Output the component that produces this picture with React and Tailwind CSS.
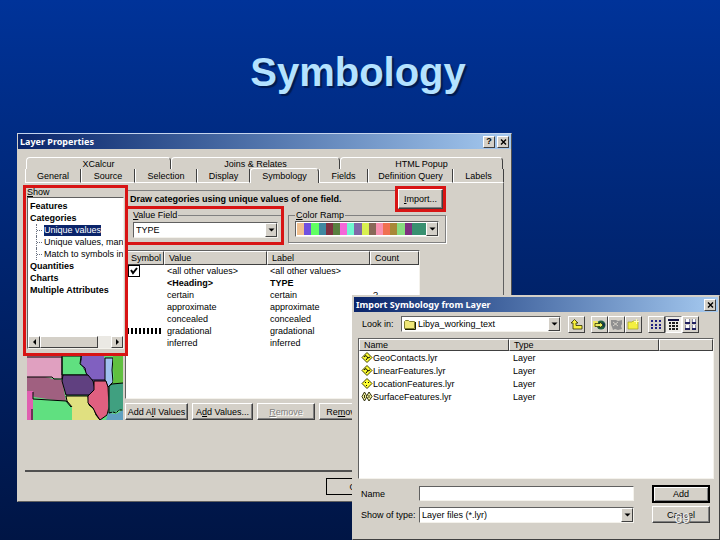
import { useState } from 'react';
import clsx from 'clsx';

const RAISED = 'border border-t-white border-l-white border-r-[#404040] border-b-[#404040] bg-[#d4d0c8]';
const SUNKEN = 'border border-t-[#606060] border-l-[#606060] border-r-[#f4f2ec] border-b-[#f4f2ec] bg-white';

const TOP_TABS = [
  { label: 'XCalcur', width: 'w-[145px]' },
  { label: 'Joins & Relates', width: 'w-[169px]' },
  { label: 'HTML Popup', width: 'flex-1' },
];
const TABS = [
  { label: 'General', width: 'w-[56px]' },
  { label: 'Source', width: 'w-[54px]' },
  { label: 'Selection', width: 'w-[62px]' },
  { label: 'Display', width: 'w-[53px]' },
  { label: 'Symbology', width: 'w-[69px]' },
  { label: 'Fields', width: 'w-[49px]' },
  { label: 'Definition Query', width: 'w-[85px]' },
  { label: 'Labels', width: 'flex-1' },
];

const SHOW_ITEMS = [
  { label: 'Features' },
  { label: 'Categories' },
  { label: 'Unique values', child: true },
  { label: 'Unique values, many f', child: true },
  { label: 'Match to symbols in a', child: true },
  { label: 'Quantities' },
  { label: 'Charts' },
  { label: 'Multiple Attributes' },
];

const ROWS = [
  { value: '<all other values>', label: '<all other values>', symbol: 'check' },
  { value: '<Heading>', label: 'TYPE', bold: true },
  { value: 'certain', label: 'certain', count: '?' },
  { value: 'approximate', label: 'approximate' },
  { value: 'concealed', label: 'concealed' },
  { value: 'gradational', label: 'gradational', symbol: 'dash' },
  { value: 'inferred', label: 'inferred' },
];

const RAMP = [
  'bg-[#f0c090]', 'bg-[#7050e0]', 'bg-[#60ff60]', 'bg-[#4088a0]', 'bg-[#803040]', 'bg-[#5a8040]',
  'bg-[#f468d8]', 'bg-[#70f8d0]', 'bg-[#8068a8]', 'bg-[#d8f050]', 'bg-[#886858]', 'bg-[#f890b0]',
  'bg-[#f07050]', 'bg-[#a88838]', 'bg-[#88dc80]', 'bg-[#803080]', 'bg-[#389070]', 'bg-[#389070]',
];

const FILES = [
  { name: 'GeoContacts.lyr', kind: 'line' },
  { name: 'LinearFeatures.lyr', kind: 'line' },
  { name: 'LocationFeatures.lyr', kind: 'point' },
  { name: 'SurfaceFeatures.lyr', kind: 'area' },
];

function TitleBar({ title, help }) {
  return (
    <div className="flex h-[15px] items-center gap-0.5 bg-linear-to-r from-[#0a246a] to-[#a6caf0] pr-0.5 pl-0.5">
      <h2 className="flex-1 font-['Noto_Sans',sans-serif] text-[9px] leading-3 font-bold whitespace-nowrap text-white">{title}</h2>
      {help && (
        <button aria-label="Help" className={clsx(RAISED, 'flex h-3 w-3 items-center justify-center text-[9px] font-bold')}>?</button>
      )}
      <button aria-label="Close" className={clsx(RAISED, 'flex h-3 w-3 items-center justify-center')}>
        <svg width="7" height="6" viewBox="0 0 7 6" stroke="#000" strokeWidth="1.4"><path d="M1 0.5 6 5.5M6 0.5 1 5.5" /></svg>
      </button>
    </div>
  );
}

function Arrow({ dir = 'down' }) {
  const paths = { down: 'M0.5 1.5h6L3.5 4.5z', left: 'M5 0v6L2 3z', right: 'M2 0v6l3-3z' };
  return <svg width="7" height="6" viewBox="0 0 7 6"><path d={paths[dir]} /></svg>;
}

function DropDown({ id, value, icon }) {
  return (
    <div className={clsx(SUNKEN, 'relative flex h-4 flex-1 items-center')}>
      {icon}
      <select id={id} className="h-full min-w-0 flex-1 appearance-none bg-transparent px-0.5 text-[9px] leading-3 outline-none">
        <option>{value}</option>
      </select>
      <span className={clsx(RAISED, 'pointer-events-none flex h-full w-3 items-center justify-center')}><Arrow /></span>
    </div>
  );
}

function Mnemonic({ text, at = 0 }) {
  return <>{text.slice(0, at)}<u>{text[at]}</u>{text.slice(at + 1)}</>;
}

function PushButton({ children, className, disabled }) {
  return (
    <button disabled={disabled} className={clsx(RAISED, 'min-h-[17px] text-[9px] leading-3 whitespace-nowrap shadow-[inset_-1px_-1px_0_#808080]', className)}>
      {children}
    </button>
  );
}

function ShowList() {
  const [selected, setSelected] = useState('Unique values');
  return (
    <div className="relative z-10 -mt-px h-[171px] w-[105px] border-[3px] border-[#d81414] bg-[#d4d0c8] px-px">
      <div className="h-[9px] text-[9px] leading-[9px]"><Mnemonic text="Show" /></div>
      <div className={clsx(SUNKEN, 'flex h-[152px] flex-col overflow-hidden')}>
        <ul className="flex-1 pt-0.5 text-[9px] leading-3">
          {SHOW_ITEMS.map(item => (
            <li key={item.label} className={clsx('flex h-3 items-center overflow-hidden', item.child ? 'pl-2' : 'pl-0.5')}>
              {item.child && <span className="mr-0.5 h-3 w-1.5 shrink-0 border-l border-dotted border-gray-500"><span className="mt-1.5 block border-t border-dotted border-gray-500" /></span>}
              <button
                onClick={() => setSelected(item.label)}
                className={clsx('h-[11px] leading-[11px] whitespace-nowrap', !item.child && 'font-bold', selected === item.label && 'bg-[#0a246a] text-white')}
              >
                {item.label}
              </button>
            </li>
          ))}
        </ul>
        <div className="flex h-3 bg-[#ebe9e4]">
          <button aria-label="Scroll left" className={clsx(RAISED, 'flex w-3 items-center justify-center')}><Arrow dir="left" /></button>
          <div className={clsx(RAISED, 'w-[58px]')} />
          <button aria-label="Scroll right" className={clsx(RAISED, 'ml-auto flex w-3 items-center justify-center')}><Arrow dir="right" /></button>
        </div>
      </div>
    </div>
  );
}

function MapPreview() {
  return (
    <svg className="ml-1 block" width="96" height="64" viewBox="0 0 96 64" stroke="#000" strokeWidth="1">
      <rect width="96" height="64" fill="#60e080" stroke="none" />
      <path d="M0 0h35l1 23-10-1-8-1H0z" fill="#e0a0c0" stroke="none" />
      <path d="M35 0h20l-1 7 4 7 3 5H35z" fill="#60e080" />
      <path d="M55 0h22l2 10-1 15H66l-6-6-2-5-4-6z" fill="#8060c0" stroke="none" />
      <path d="M54 0l-1 8 5 4 1 5 5 7h14" fill="none" />
      <path d="M78 2h8l-1 12 1 12-5 5-3-7z" fill="#a0c0f0" />
      <path d="M86 0h10v28l-11 2 2-9-1-8z" fill="#60c040" stroke="none" />
      <path d="M0 21h18l8 2 9 1 4 21-12-1-20-3-2-6H0z" fill="#a06080" stroke="none" />
      <path d="M0 21h25l2 2h8M0 1h35v22" fill="none" />
      <path d="M36 19h25l5 6 2 8-6 6H39l-4-14z" fill="#604080" />
      <path d="M0 35h6v29H0z" fill="#e060b0" stroke="none" />
      <path d="M5 64V53M6 36v7l33 2 5 6" fill="none" />
      <path d="M39 40h22l1 9 5 4 2 6 4 5H45V51l-5-6z" fill="#e0e080" stroke="none" />
      <path d="M39 40h22l1 9 5 4 2 6 4 5M39 40l1 5 5 6" fill="none" />
      <path d="M67 25h12l2 6 1 20-2 8-7 5-4-6-3-6-5-5v-7l6-6z" fill="#e06080" />
      <path d="M82 30l3-2 11-1v26l-8 3-6 2-1-8z" fill="#40a080" stroke="none" />
      <path d="M96 27l-11 1-3 2v28" fill="none" />
      <path d="M81 57l8 1 7-4v10H79z" fill="#60a0c0" stroke="none" />
      <path d="M82 57l4-1 3 1 3-3h4" fill="none" strokeDasharray="3 1" />
    </svg>
  );
}

function SymbolTable() {
  return (
    <div className="h-[149px] overflow-hidden border border-t-[#606060] border-l-[#606060] border-r-[#f4f2ec] border-b-[#f4f2ec] bg-white">
      <table className="w-full table-fixed border-separate border-spacing-0 text-left text-[9px] leading-3">
        <thead>
          <tr className="h-[14px]">
            {['Symbol', 'Value', 'Label', 'Count'].map((h, i) => (
              <th key={h} className={clsx(RAISED, 'px-1 font-normal', ['w-[38px]', 'w-[103px]', 'w-[103px]', 'w-auto'][i])}>{h}</th>
            ))}
          </tr>
        </thead>
        <tbody>
          {ROWS.map(row => (
            <tr key={row.value} className={clsx('h-3 whitespace-nowrap', row.bold && 'font-bold')}>
              <td className="p-0">
                {row.symbol === 'check' && (
                  <label className="relative ml-0.5 block h-3 w-3">
                    <input type="checkbox" defaultChecked aria-label="Show all other values" className="peer block h-3 w-3 appearance-none border border-black bg-white" />
                    <svg className="pointer-events-none absolute inset-0 hidden peer-checked:block" width="12" height="12" viewBox="0 0 12 12" fill="none" stroke="#000" strokeWidth="2"><path d="M3 5l2 3 4-5" /></svg>
                  </label>
                )}
                {row.symbol === 'dash' && (
                  <svg width="36" height="6" viewBox="0 0 36 6" className="block" stroke="#000" strokeWidth="6" strokeDasharray="2 2"><path d="M1 3h34" /></svg>
                )}
              </td>
              <td className="p-0 pl-[3px]">{row.value}</td>
              <td className="p-0 pl-[3px]">{row.label}</td>
              <td className="p-0 pl-[3px]">{row.count}</td>
            </tr>
          ))}
        </tbody>
      </table>
    </div>
  );
}

function LayerProperties() {
  const [tab, setTab] = useState('Symbology');
  return (
    <section className="mr-[208px] ml-[17px] h-[369px] border border-t-[#c4d4ee] border-l-[#d4d0c8] border-r-[#505050] border-b-[#606060] bg-[#d4d0c8]">
      <TitleBar title="Layer Properties" help />
      <div className="flex flex-col px-[7px] pt-2">
        <div className="flex h-3 px-px">
          {TOP_TABS.map(({ label, width }) => (
            <button key={label} className={clsx('rounded-t-sm border-t border-r border-l border-t-white border-r-[#404040] border-l-white text-[9px] leading-3', width)}>{label}</button>
          ))}
        </div>
        <div className="flex h-[14px] items-end">
          {TABS.map(({ label, width }) => (
            <button
              key={label}
              onClick={() => setTab(label)}
              className={clsx(
                'border-r border-l border-r-[#404040] border-l-white text-[9px] leading-3 whitespace-nowrap',
                width,
                tab === label ? 'h-[15px] rounded-t-sm border-t border-t-white bg-[#d4d0c8]' : 'h-[14px] border-b border-b-white',
              )}
            >
              {label}
            </button>
          ))}
        </div>

        <div className="flex h-[289px] border-r border-b-2 border-r-[#606060] border-b-[#505050] pt-[3px]">
          <div className="-ml-0.5 w-[102px] shrink-0">
            <ShowList />
            <MapPreview />
          </div>

          <div className="mr-[57px] min-w-0 flex-1">
            <div className="flex h-5 items-start">
              <p className="mt-1 h-[17px] min-w-0 flex-1 border-t border-[#808080] pt-0.5 pl-[5px] text-[9px] leading-3 font-bold whitespace-nowrap">
                Draw categories using unique values of one field.
              </p>
              <div className="relative z-10 flex h-[26px] w-[51px] border-[3px] border-[#d81414] bg-[#d4d0c8]">
                <PushButton className="flex-1"><Mnemonic text="Import..." /></PushButton>
              </div>
            </div>

            <div className="flex h-[39px] items-start gap-1">
              <div className="h-full w-[159px] border-[3px] border-[#d81414] pl-0.5">
                <div className="flex items-center">
                  <label htmlFor="value-field" className="pr-px pl-[3px] text-[9px] leading-[13px]"><Mnemonic text="Value Field" /></label>
                  <span className="h-px flex-1 bg-[#808080]" />
                </div>
                <div className="flex px-[3px]"><DropDown id="value-field" value="TYPE" /></div>
              </div>
              <fieldset className="mt-[3px] h-[34px] min-w-0 flex-1 border border-[#808080] px-1.5 shadow-[1px_1px_0_#fff]">
                <legend className="px-px text-[9px] leading-3"><Mnemonic text="Color Ramp" /></legend>
                <button aria-label="Color Ramp" aria-haspopup="listbox" className={clsx(SUNKEN, 'flex h-4 w-full pl-px')}>
                  <span className="flex h-full flex-1 py-px">
                    {RAMP.map((c, i) => <span key={i} className={clsx('flex-1', c)} />)}
                  </span>
                  <span className={clsx(RAISED, 'flex h-full w-3 items-center justify-center')}><Arrow /></span>
                </button>
              </fieldset>
            </div>

            <div className="mt-[5px] mr-[26px]"><SymbolTable /></div>
            <div className="mt-1 flex gap-1 overflow-hidden">
              <PushButton className="w-[63px] shrink-0"><Mnemonic text="Add All Values" at={5} /></PushButton>
              <PushButton className="w-[61px] shrink-0"><Mnemonic text="Add Values..." at={1} /></PushButton>
              <PushButton disabled className="w-[58px] shrink-0 text-[#808080] [text-shadow:1px_1px_0_#fff]"><Mnemonic text="Remove" /></PushButton>
              <PushButton className="w-[60px] shrink-0"><Mnemonic text="Remove All" at={2} /></PushButton>
            </div>
          </div>
        </div>
        <div className="mt-1.5 flex justify-end">
          <button className="mr-[118px] h-[17px] w-[60px] border border-black bg-[#d4d0c8] text-[9px] leading-3">OK</button>
        </div>
      </div>
    </section>
  );
}

function LayerIcon({ kind }) {
  return (
    <svg width="12" height="11" viewBox="0 0 12 11" className="shrink-0">
      {kind === 'area' ? (
        <g fill="#f4f4a0" stroke="#303010"><path d="M3.5 1 6 5.5 3.5 10 1 5.5z" /><path d="M8 1l3 4.500L8 10 5.500 5.500z" /><path d="M3.500 4v3M8 4v3" /></g>
      ) : (
        <path d="M6 0.500 11 5.500 6 10.500 1 5.500z" fill="#ffff30" stroke="#404000" />
      )}
      {kind === 'line' && <path d="M3 5l2-1.500L7 6l2-1M5 8l1.500-2" fill="none" stroke="#000" />}
      {kind === 'point' && <path d="M4 4h1v1H4zM7 4h1v1H7zM5 7h1v1H5z" />}
    </svg>
  );
}

function ToolButton({ label, pressed, children }) {
  return (
    <button
      aria-label={label}
      className={clsx(
        'flex h-[17px] w-[17px] items-center justify-center border',
        pressed
          ? 'border-t-[#808080] border-l-[#808080] border-r-white border-b-white bg-[#efede8]'
          : 'border-t-white border-l-white border-r-[#404040] border-b-[#404040] bg-[#d4d0c8]',
      )}
    >
      <svg width="13" height="13" viewBox="0 0 13 13">{children}</svg>
    </button>
  );
}

function ImportDialog() {
  const [filename, setFilename] = useState('');
  return (
    <section className="absolute right-0 bottom-0 h-[245px] w-[368px] border border-t-[#d4d0c8] border-l-[#d4d0c8] border-r-[#404040] border-b-[#404040] bg-[#d4d0c8] p-px">
      <TitleBar title="Import Symbology from Layer" />
      <div className="flex h-[26px] items-center pr-4 pb-0.5 pl-2">
        <label htmlFor="look-in" className="w-[39px] text-[9px] leading-3">Look in:</label>
        <div className="flex w-[160px]">
          <DropDown
            id="look-in"
            value="Libya_working_text"
            icon={(
              <svg className="ml-0.5 shrink-0" width="12" height="11" viewBox="0 0 12 11"><path d="M0.5 9.5v-7l1-1h3l1 1h5v7z" fill="#f0e878" stroke="#808030" /><path d="M1 10.5h10.5V3" fill="none" stroke="#202000" /></svg>
            )}
          />
        </div>
        <div className="ml-[7px] flex">
          <ToolButton label="Up One Level">
            <path d="M1 5l3.500-3.500L8 5H6v2.500h6V11H3V5z" fill="#f8f040" stroke="#303000" strokeWidth="0.800" />
          </ToolButton>
          <div className="ml-1.5 flex">
            <ToolButton label="Connect To Folder">
              <circle cx="8" cy="7" r="4.500" fill="#206040" /><path d="M9 4l3 2-1 4z" fill="#103050" />
              <path d="M0 3h4l1 1v5H0z" fill="#f0e860" /><path d="M2 5.500h5V4l3 3-3 3V8.500H2z" fill="#e8f060" stroke="#202000" strokeWidth="0.700" />
            </ToolButton>
            <ToolButton label="Disconnect From Folder">
              <path d="M1 2h5l2 1 4-1v4l-1 2 1 3-4 1-3-1-2 1-1-3-1-2z" fill="#909090" /><path d="M3 4l5 4M8 4l-5 4" stroke="#d4d0c8" />
            </ToolButton>
            <ToolButton label="New Folder">
              <path d="M1 4h4l1-1h5v8H1z" fill="#f4f040" stroke="#a0a020" strokeWidth="0.700" /><path d="M9.500 1v5M7 3.500h5" stroke="#ffffb0" />
            </ToolButton>
          </div>
          <div className="ml-1.5 flex">
            <ToolButton label="List">
              <path d="M1 3h3M5 3h3M9 3h3M1 7h3M5 7h3M9 7h3M1 10h3M5 10h3M9 10h3" stroke="#202080" strokeWidth="2" strokeDasharray="2 1" />
            </ToolButton>
            <ToolButton label="Details" pressed>
              <path d="M1 2h11" stroke="#101040" strokeWidth="2" /><path d="M2 5h2M5 5h3M9 5h2M2 8h2M5 8h3M9 8h2M2 11h2M5 11h3M9 11h2" stroke="#202020" strokeWidth="2" />
            </ToolButton>
            <ToolButton label="Thumbnails">
              <path d="M2 1h3v3H2zM8 1h3v3H8zM2 7h3v3H2zM8 7h3v3H8z" fill="#fff" /><path d="M1.500 1v3M5.500 1v3M8.500 1v3M11.500 1v3M1.500 7v3M5.500 7v3M8.500 7v3M11.500 7v3" stroke="#9090a8" /><path d="M1 5h5M8 5h4M1 11h5M8 11h4" stroke="#202060" strokeWidth="2" />
            </ToolButton>
          </div>
        </div>
      </div>

      <div className="mx-1 h-[141px] border border-t-[#606060] border-l-[#606060] border-r-[#f4f2ec] border-b-[#f4f2ec] bg-white">
        <table className="w-full table-fixed border-separate border-spacing-0 text-left text-[9px] leading-3">
          <thead>
            <tr className="h-3">
              <th className={clsx(RAISED, 'w-[150px] py-0 pl-1 leading-[10px] font-normal')}>Name</th>
              <th className={clsx(RAISED, 'w-[150px] py-0 pl-1 leading-[10px] font-normal')}>Type</th>
              <th className={clsx(RAISED, 'p-0')} />
            </tr>
          </thead>
          <tbody>
            {FILES.map(f => (
              <tr key={f.name} className="h-[13px]">
                <td className="p-0 pl-0.5"><span className="flex items-center"><LayerIcon kind={f.kind} />{f.name}</span></td>
                <td className="p-0 pl-1">Layer</td>
                <td className="p-0" />
              </tr>
            ))}
          </tbody>
        </table>
      </div>

      <div className="mt-1.5 flex flex-col gap-1 pr-2 pl-[7px]">
        <div className="flex h-[17px] items-center">
          <label htmlFor="file-name" className="w-[58px] text-[9px] leading-3">Name</label>
          <input id="file-name" value={filename} onChange={e => setFilename(e.target.value)} className={clsx(SUNKEN, 'h-[15px] min-w-0 flex-1 px-0.5 text-[9px] outline-none')} />
          <button className="ml-[18px] h-[18px] w-[58px] border-2 border-black bg-[#d4d0c8] text-[9px] leading-3 shadow-[inset_1px_1px_0_#fff,inset_-1px_-1px_0_#808080]">Add</button>
        </div>
        <div className="flex h-[17px] items-center">
          <label htmlFor="file-type" className="w-[58px] text-[9px] leading-3">Show of type:</label>
          <DropDown id="file-type" value="Layer files (*.lyr)" />
          <PushButton className="ml-[18px] w-[58px]">Cancel</PushButton>
        </div>
      </div>
    </section>
  );
}

export default function App() {
  return (
    <main className="relative min-h-screen overflow-hidden bg-linear-to-b from-[#003399] to-[#001545] font-['Liberation_Sans',sans-serif] text-black">
      <h1 className="pt-12 pr-1 pb-[37px] text-center text-[40px] leading-[48px] font-bold text-[#b4e2ff] [text-shadow:2px_2px_1px_#001a50]">Symbology</h1>
      <LayerProperties />
      <ImportDialog />
      <span className="absolute right-[30px] bottom-4 text-[14px] leading-3 text-[#f0f0f0] [text-shadow:1px_1px_0_#707070]">69</span>
    </main>
  );
}
